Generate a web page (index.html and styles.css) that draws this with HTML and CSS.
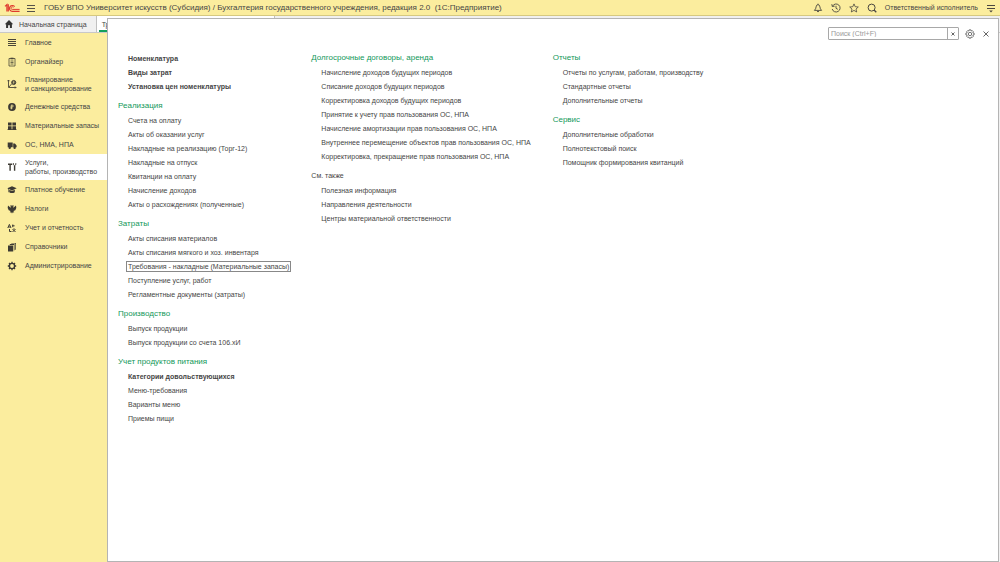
FILE: index.html
```
<!DOCTYPE html>
<html lang="ru">
<head>
<meta charset="utf-8">
<title>1С:Предприятие</title>
<link rel="stylesheet" href="styles.css">
</head>
<body>
<div class="app">
  <header class="topbar">
    <svg class="logo" viewBox="0 0 16 10" fill="none" stroke="#df3b2f"><path d="M1 3.4 2.9 1.6V8.6M4.3 8.6V1.2" stroke-width="1.2"/><path d="M10.6 3.6A2.9 2.9 0 1 0 8.4 8.3H15.6" stroke-width="1.2"/><path d="M9.4 4.4A1.3 1.3 0 1 0 8.4 6.4H15.6" stroke-width="1"/></svg>
    <button class="icon-btn" aria-label="Меню"><svg viewBox="0 0 10 10" fill="none" stroke="#55524a"><path d="M1 2.5h8M1 5.5h8M1 8.5h8"/></svg></button>
    <h1 class="title">ГОБУ ВПО Университет искусств (Субсидия) / Бухгалтерия государственного учреждения, редакция 2.0 &nbsp;(1С:Предприятие)</h1>
    <div class="top-tools">
      <button class="icon-btn" aria-label="Оповещения"><svg viewBox="0 0 10 10" fill="none" stroke="#4a4740" stroke-width=".9"><path d="M1.4 7.4C3.8 5.8 2.3 1.6 5 1.6S6.200 5.800 8.600 7.400ZM4 8.200Q5 9.600 6 8.200M5 .7v1"/></svg></button>
      <button class="icon-btn" aria-label="История"><svg viewBox="0 0 10 10" fill="none" stroke="#4a4740" stroke-width=".9"><path d="M1.500 3.200A4 4 0 1 1 1.200 6M.8 1.200l.5 2.300 2.300-.3M5 2.800v2.500l1.800 1"/></svg></button>
      <button class="icon-btn" aria-label="Избранное"><svg viewBox="0 0 10 10" fill="none" stroke="#4a4740" stroke-width=".8"><path d="m5 .9 1.200 2.800 3.100.3-2.300 2 .7 3L5 7.400 2.300 9 3 6 .7 4l3.100-.3Z"/></svg></button>
      <button class="icon-btn" aria-label="Поиск"><svg viewBox="0 0 10 10" fill="none" stroke="#4a4740"><circle cx="4.600" cy="4.600" r="3.500"/><path d="m7 7 2.300 2.300" stroke-width="1.300"/></svg></button>
      <button class="user">Ответственный исполнитель</button>
      <button class="icon-btn" aria-label="Сервис"><svg viewBox="0 0 10 10" fill="none" stroke="#4a4740"><path d="M1 2.500h8M1 5.500h8"/><path d="M3.200 7.500h3.600L5 9.500Z" fill="#4a4740" stroke="none"/></svg></button>
    </div>
  </header>
  <div class="tabs">
    <button class="tab"><svg viewBox="0 0 10 10" fill="#333"><path d="M5 1 .8 5.200h1.300V9h2V6.200h1.800V9h2V5.200h1.300Z"/></svg>Начальная страница</button>
    <button class="tab tab-active">Тр</button>
  </div>
  <nav class="sidebar">
    <a class="nav-item" href="#"><svg viewBox="0 0 10 10" fill="none" stroke="#4a4638"><path d="M1 1.500h8M1 3.500h8M1 5.500h8M1 7.500h8"/></svg>Главное</a>
    <a class="nav-item" href="#"><svg viewBox="0 0 10 10" fill="none" stroke="#4a4638"><path d="M2 1.500h6v7.500H2ZM3.500 4h3M3.500 5.500h3M3.500 7h3" stroke-width=".8"/><path d="M3.500 1.500h3" stroke-width="1.600"/></svg>Органайзер</a>
    <a class="nav-item nav-double" href="#"><svg viewBox="0 0 10 10" fill="none" stroke="#4a4638" stroke-width=".9"><path d="M1.500 1v7.500H9M.5 2.200 1.500 1l1 1.200M8 7.500l1 1-1 1M2 8l2.500-3"/><circle cx="6.700" cy="3.500" r="2.100" fill="#4a4638"/><path d="M6.300 4.800V2.500h.8q.6.700 0 1.200H6" stroke="#fbed9e" stroke-width=".5"/></svg><span>Планирование<br>и санкционирование</span></a>
    <a class="nav-item" href="#"><svg viewBox="0 0 10 10"><circle cx="5" cy="5" r="3.900" fill="#3d3a33"/><path d="M4.300 7.300V3h1.300q1.200 1 0 2H3.500M3.500 6.100h2" stroke="#fbed9e" stroke-width=".8" fill="none"/></svg>Денежные средства</a>
    <a class="nav-item" href="#"><svg viewBox="0 0 10 10" fill="#3d3a33"><path d="M1 1.500h3.600v3H1ZM5.400 1.500H9v3H5.400ZM1 5.200h3.600v3H1ZM5.400 5.200H9v3H5.400ZM.5 8.300h9v.8h-9Z"/></svg>Материальные запасы</a>
    <a class="nav-item" href="#"><svg viewBox="0 0 10 10" fill="#3d3a33"><path d="M.7 2.500h5v4.800h-5ZM6.200 3.500h1.700L9.600 5.500v1.800H6.200Z"/><circle cx="2.700" cy="7.700" r="1.200"/><circle cx="7.600" cy="7.700" r="1.200"/></svg>ОС, НМА, НПА</a>
    <a class="nav-item nav-double nav-current" href="#"><svg viewBox="0 0 10 10" fill="none" stroke="#3d3a33"><path d="M1 2.300h4.200M3.100 2.300v6.500M7.600 3.800v5" stroke-width="1.400"/><path d="M6.400 1.200v1.500q1.200 1.600 2.400 0V1.200"/></svg><span>Услуги,<br>работы, производство</span></a>
    <a class="nav-item" href="#"><svg viewBox="0 0 10 10" fill="#3d3a33"><path d="M5 1.200 9.700 3.300 5 5.400.3 3.300ZM2.200 4.800 5 6.100l2.800-1.300v2.400Q5 9 2.200 7.200ZM1 3.800h.6v3.400H1Z"/></svg>Платное обучение</a>
    <a class="nav-item" href="#"><svg viewBox="0 0 10 10" fill="#3d3a33"><path d="M5 2.600 4.300 1 3.200 1.800 4 3.300 3.300 3.600 1 1.600.7 4l1 2.200L3.600 7l-.8 1.600 1.400-.4L5 9.500l.8-1.300 1.400.4L6.400 7l1.900-.8 1-2.200L9 1.600 6.700 3.600 6 3.300l.8-1.500L5.700 1Z"/></svg>Налоги</a>
    <a class="nav-item" href="#"><svg viewBox="0 0 10 10" fill="none" stroke="#3d3a33"><path d="m.8 5 1.600-3.600L4 5M1.400 4h2M5 2.800h2.600M5.800 1.500v2.700M2.500 6v2.500h2M5.500 6l3 3M8.500 6l-3 3M7 5.300v1"/></svg>Учет и отчетность</a>
    <a class="nav-item" href="#"><svg viewBox="0 0 10 10" fill="#3d3a33"><path d="M4.300.9H9v6.500l-.7.700V1.600H4.300ZM2.800 2.100h4.700v6l-.6.700V2.900H2.800ZM1 3.400h5.200v6H1Z"/></svg>Справочники</a>
    <a class="nav-item" href="#"><svg viewBox="0 0 10 10" fill="none" stroke="#3d3a33"><circle cx="5" cy="5" r="2.600" stroke-width="1.400"/><path d="M5 .8v1.400M5 7.800v1.400M.8 5h1.400M7.800 5h1.400M2 2l1 1M7 7l1 1M8 2 7 3M3 7 2 8" stroke-width="1.300"/></svg>Администрирование</a>
  </nav>
  <main class="panel">
    <div class="tools">
      <div class="search">
        <input class="search-input" type="text" placeholder="Поиск (Ctrl+F)" aria-label="Поиск">
        <button class="search-clear" aria-label="Очистить"><svg viewBox="0 0 6 6" stroke="#555" stroke-width=".9"><path d="m1.500 1.500 3 3M4.500 1.500l-3 3"/></svg></button>
      </div>
      <button class="icon-btn" aria-label="Настройка"><svg viewBox="0 0 10 10" fill="none" stroke="#555" stroke-width=".8"><path d="M4.200.8h1.600l.3 1.200 1.200-.4 1.100 1.200-.6 1.100 1.400.4v1.400l-1.400.4.6 1.100-1.100 1.200-1.200-.4-.3 1.200H4.200L3.900 8l-1.200.4-1.100-1.200.6-1.100L.8 5.700V4.300l1.400-.4-.6-1.100 1.100-1.200 1.200.4Z"/><circle cx="5" cy="5" r="1.700"/></svg></button>
      <button class="icon-btn close" aria-label="Закрыть"><svg viewBox="0 0 10 10" stroke="#555" stroke-width=".9"><path d="m2.500 2.500 5 5M7.500 2.500l-5 5"/></svg></button>
    </div>
    <div class="columns">
      <div class="column column-first">
        <section class="group"><ul class="links">
          <li><a class="strong" href="#">Номенклатура</a></li>
          <li><a class="strong" href="#">Виды затрат</a></li>
          <li><a class="strong" href="#">Установка цен номенклатуры</a></li>
        </ul></section>
        <section class="group"><h2>Реализация</h2><ul class="links">
          <li><a href="#">Счета на оплату</a></li>
          <li><a href="#">Акты об оказании услуг</a></li>
          <li><a href="#">Накладные на реализацию (Торг-12)</a></li>
          <li><a href="#">Накладные на отпуск</a></li>
          <li><a href="#">Квитанции на оплату</a></li>
          <li><a href="#">Начисление доходов</a></li>
          <li><a href="#">Акты о расхождениях (полученные)</a></li>
        </ul></section>
        <section class="group"><h2>Затраты</h2><ul class="links">
          <li><a href="#">Акты списания материалов</a></li>
          <li><a href="#">Акты списания мягкого и хоз. инвентаря</a></li>
          <li><a class="focused" href="#">Требования - накладные (Материальные запасы)</a></li>
          <li><a href="#">Поступление услуг, работ</a></li>
          <li><a href="#">Регламентные документы (затраты)</a></li>
        </ul></section>
        <section class="group"><h2>Производство</h2><ul class="links">
          <li><a href="#">Выпуск продукции</a></li>
          <li><a href="#">Выпуск продукции со счета 106.хИ</a></li>
        </ul></section>
        <section class="group"><h2>Учет продуктов питания</h2><ul class="links">
          <li><a class="strong" href="#">Категории довольствующихся</a></li>
          <li><a href="#">Меню-требования</a></li>
          <li><a href="#">Варианты меню</a></li>
          <li><a href="#">Приемы пищи</a></li>
        </ul></section>
      </div>
      <div class="column">
        <section class="group"><h2>Долгосрочные договоры, аренда</h2><ul class="links">
          <li><a href="#">Начисление доходов будущих периодов</a></li>
          <li><a href="#">Списание доходов будущих периодов</a></li>
          <li><a href="#">Корректировка доходов будущих периодов</a></li>
          <li><a href="#">Принятие к учету прав пользования ОС, НПА</a></li>
          <li><a href="#">Начисление амортизации прав пользования ОС, НПА</a></li>
          <li><a href="#">Внутреннее перемещение объектов прав пользования ОС, НПА</a></li>
          <li><a href="#">Корректировка, прекращение прав пользования ОС, НПА</a></li>
        </ul></section>
        <section class="group"><h2 class="see-also">См. также</h2><ul class="links">
          <li><a href="#">Полезная информация</a></li>
          <li><a href="#">Направления деятельности</a></li>
          <li><a href="#">Центры материальной ответственности</a></li>
        </ul></section>
      </div>
      <div class="column">
        <section class="group"><h2>Отчеты</h2><ul class="links">
          <li><a href="#">Отчеты по услугам, работам, производству</a></li>
          <li><a href="#">Стандартные отчеты</a></li>
          <li><a href="#">Дополнительные отчеты</a></li>
        </ul></section>
        <section class="group"><h2>Сервис</h2><ul class="links">
          <li><a href="#">Дополнительные обработки</a></li>
          <li><a href="#">Полнотекстовый поиск</a></li>
          <li><a href="#">Помощник формирования квитанций</a></li>
        </ul></section>
      </div>
    </div>
  </main>
</div>
</body>
</html>
```
FILE: styles.css
```
* { box-sizing: border-box; }
body {
  margin: 0;
  font: 7px/9px "Liberation Sans", Arial, sans-serif;
  color: #454545;
  background: #f0f0f0;
}
a { color: inherit; text-decoration: none; }
button { font: inherit; color: inherit; background: none; border: 0; padding: 0; }
svg { display: block; flex: none; width: 10px; height: 10px; }
h1, h2, ul { margin: 0; padding: 0; font-weight: normal; list-style: none; }

.app {
  position: relative;
  display: grid;
  grid-template: 16px 17px 1fr / 108px 1fr;
  min-height: 100vh;
}
.topbar {
  grid-column: 1 / -1;
  display: flex;
  align-items: center;
  padding: 0 4px;
  background: #fbed9e;
  border-bottom: 1px solid #d6c980;
}
.logo { width: 16px; margin-right: 6px; }
.title { margin-left: 8px; font-size: 8px; white-space: nowrap; }
.top-tools { display: flex; align-items: center; gap: 8px; margin-left: auto; }
.user { white-space: nowrap; }

.tabs { grid-column: 1 / -1; display: flex; border-bottom: 1px solid #c8c8c8; }
.tab {
  display: flex;
  align-items: center;
  gap: 5px;
  padding: 0 9px 0 4px;
  border-right: 1px solid #c0c0c0;
}
.tab-active {
  width: 178px;
  padding-left: 5px;
  background: linear-gradient(#12a05c, #12a05c) 2px 100% / 100% 2px no-repeat #fff;
}

.sidebar { display: flex; flex-direction: column; background: #fbed9e; }
.nav-item {
  display: flex;
  align-items: center;
  gap: 8px;
  height: 19px;
  padding-left: 7px;
  white-space: nowrap;
}
.nav-double { height: 26px; }
.nav-current { background: #fff; }

/* Section menu lies over the tabs and the work area */
.panel {
  position: absolute;
  inset: 18px 1px 0 107px;
  background: #fff;
  border: 1px solid #b4b4b4;
}
.tools {
  display: flex;
  justify-content: flex-end;
  align-items: center;
  gap: 6px;
  padding: 8px 7px 0;
}
.search {
  display: flex;
  width: 131px;
  height: 13px;
  margin-right: 0;
  border: 1px solid #a8a8a8;
  border-radius: 1px;
}
.search-input {
  flex: 1;
  min-width: 0;
  padding: 0 2px;
  border: 0;
  outline: 0;
  background: none;
  font: inherit;
}
.search-input::placeholder { color: #999; opacity: 1; }
.search-clear {
  display: grid;
  place-items: center;
  width: 11px;
  border-left: 1px solid #a8a8a8;
}
.search-clear svg { width: 6px; height: 6px; }

.columns { display: flex; gap: 22px; padding: 9px 10px; }
.column { display: grid; gap: 3px; align-content: start; }
.column-first { padding-top: 3px; }
.group h2 { font-size: 8px; line-height: 17px; color: #12985a; }
.group .see-also { font-size: 7px; color: inherit; }
.links { padding-left: 10px; line-height: 14px; white-space: nowrap; }
.strong { font-weight: bold; }
.focused { outline: 1px solid #888; outline-offset: 1px; }
```
